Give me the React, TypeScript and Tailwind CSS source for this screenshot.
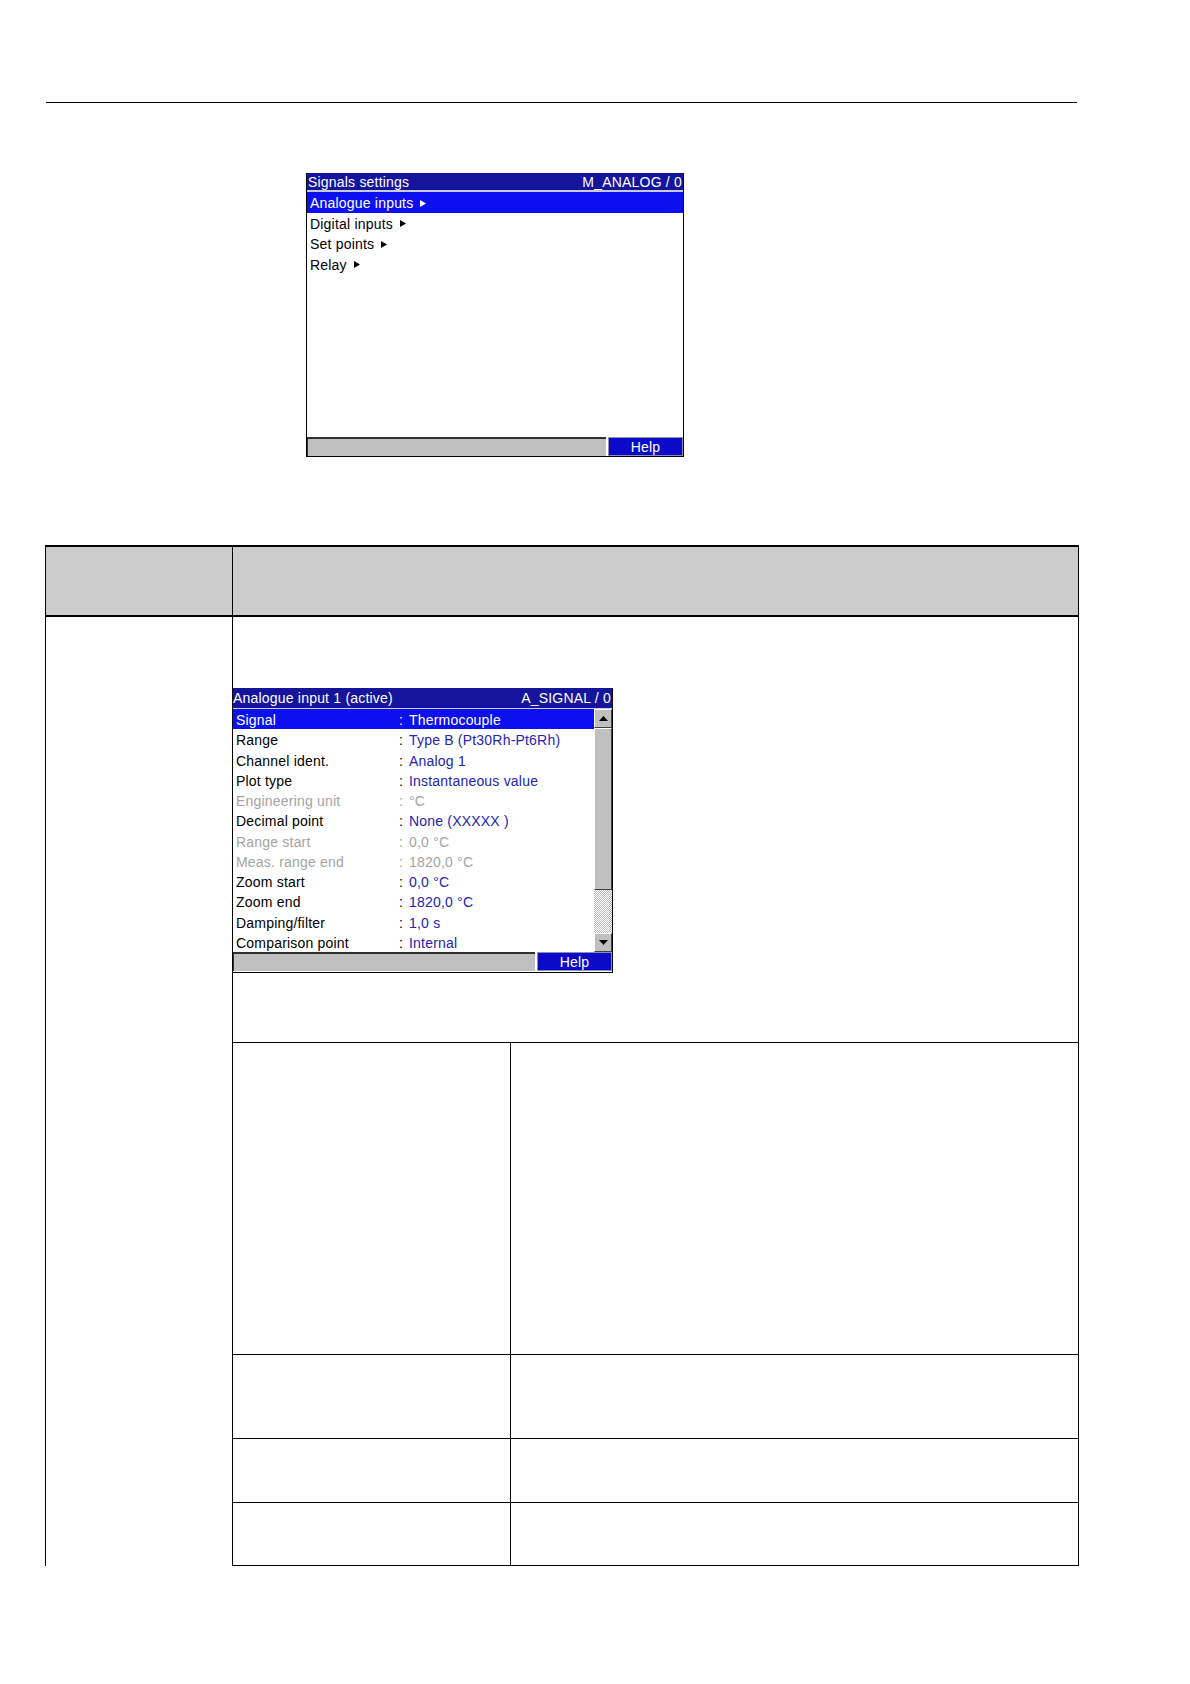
import React from 'react';

interface SignalRow {
  label: string;
  value: string;
  selected?: boolean;
  dim?: boolean;
}

const signalRows: SignalRow[] = [
  { label: 'Signal', value: 'Thermocouple', selected: true },
  { label: 'Range', value: 'Type B (Pt30Rh-Pt6Rh)' },
  { label: 'Channel ident.', value: 'Analog 1' },
  { label: 'Plot type', value: 'Instantaneous value' },
  { label: 'Engineering unit', value: '°C', dim: true },
  { label: 'Decimal point', value: 'None (XXXXX )' },
  { label: 'Range start', value: '0,0 °C', dim: true },
  { label: 'Meas. range end', value: '1820,0 °C', dim: true },
  { label: 'Zoom start', value: '0,0 °C' },
  { label: 'Zoom end', value: '1820,0 °C' },
  { label: 'Damping/filter', value: '1,0 s' },
  { label: 'Comparison point', value: 'Internal' },
];

const menuItems = ['Analogue inputs', 'Digital inputs', 'Set points', 'Relay'];

// kleines Dreieck hinter den Menüpunkten
const Arrow = ({ white }: { white?: boolean }) => (
  <svg width="6" height="7" viewBox="0 0 6 7" className="ml-[7px] inline-block">
    <path d="M0 0 L6 3.5 L0 7 Z" fill={white ? '#ffffff' : '#000000'} />
  </svg>
);

const HelpBar = () => (
  <div className="flex h-[19px]">
    <div className="flex-1 bg-[#c0c0c0] border-t-2 border-l border-[#303030]" />
    <div className="w-[75px] ml-[2px] bg-[#0a0ac8] border border-[#8c8cb4] text-white text-[14px] leading-[15px] pt-[2px] text-center overflow-hidden">
      Help
    </div>
  </div>
);

const SignalsScreen = () => (
  <div className="w-[378px] h-[284px] flex flex-col border-x border-b border-black bg-white tracking-[0.2px]">
    <div className="h-[17px] bg-[#14149c] text-white text-[14px] leading-[17px] pt-[1px] flex justify-between px-[1px] overflow-hidden">
      <span>Signals settings</span>
      <span>M_ANALOG / 0</span>
    </div>
    <div className="h-[2px] bg-[#c8c8d8]" />
    <div className="flex-1">
      {menuItems.map((item, i) => (
        <div
          key={item}
          className={`h-[20.5px] pl-[3px] pt-[2px] text-[14px] leading-[18px] flex items-center ${
            i === 0 ? 'bg-[#0c10f0] text-white' : 'text-black'
          }`}
        >
          {item}
          <Arrow white={i === 0} />
        </div>
      ))}
    </div>
    <HelpBar />
  </div>
);

const ScrollButton = ({ down }: { down?: boolean }) => (
  <div className="h-[19px] bg-[#c0c0c0] border-t border-l border-t-white border-l-white border-b border-r border-b-[#404040] border-r-[#404040] flex items-center justify-center">
    <svg width="9" height="5" viewBox="0 0 9 5">
      <path d={down ? 'M0 0 L9 0 L4.5 5 Z' : 'M0 5 L9 5 L4.5 0 Z'} fill="#000000" />
    </svg>
  </div>
);

const AnalogueScreen = () => (
  <div className="-ml-px w-[381px] h-[285px] flex flex-col border-x border-b border-black bg-white tracking-[0.2px]">
    <div className="h-[20px] bg-[#14149c] text-white text-[14px] leading-[20px] flex justify-between pr-[1px]">
      <span>Analogue input 1 (active)</span>
      <span>A_SIGNAL / 0</span>
    </div>
    <div className="h-px bg-[#d0d0e0]" />
    <div className="flex h-[243px]">
      <div className="flex-1">
        {signalRows.map((row) => {
          const labelColor = row.selected
            ? 'text-white'
            : row.dim
            ? 'text-[#a4a4a4]'
            : 'text-black';
          const valueColor = row.selected
            ? 'text-white'
            : row.dim
            ? 'text-[#a4a4a4]'
            : 'text-[#2424b0]';
          return (
            <div
              key={row.label}
              className={`h-[20.25px] flex text-[14px] leading-[20px] pl-[3px] pt-px ${
                row.selected ? 'bg-[#0c10f0]' : ''
              }`}
            >
              <span className={`w-[163px] ${labelColor}`}>{row.label}</span>
              <span className={`w-[10px] ${labelColor}`}>:</span>
              <span className={valueColor}>{row.value}</span>
            </div>
          );
        })}
      </div>
      <div className="w-[18px] flex flex-col">
        <ScrollButton />
        <div className="h-[162px] bg-[#c0c0c0] border-t border-l border-t-white border-l-white border-b border-r border-b-[#404040] border-r-[#404040]" />
        <div className="flex-1 bg-[repeating-conic-gradient(#bcbcbc_0_25%,#ffffff_0_50%)] bg-[length:2px_2px]" />
        <ScrollButton down />
      </div>
    </div>
    <HelpBar />
  </div>
);

export default function App() {
  return (
    <div className="w-[1190px] min-h-[1684px] bg-white pt-[102px] font-['Liberation_Sans',Arial,sans-serif]">
      <div className="ml-[46px] w-[1031px] h-px bg-black" />

      <div className="mt-[70px] ml-[306px]">
        <SignalsScreen />
      </div>

      <div className="mt-[88px] ml-[45px] w-[1034px] grid grid-cols-[187px_1fr]">
        <div className="h-[72px] bg-[#cccccc] border-t-2 border-b-2 border-l border-black" />
        <div className="h-[72px] bg-[#cccccc] border-t-2 border-b-2 border-l border-r border-black" />

        <div className="h-[949px] border-l border-black" />
        <div className="h-[949px] border-l border-r border-black flex flex-col">
          <div className="h-[425px] pt-[71px]">
            <AnalogueScreen />
          </div>
          <div className="grid grid-cols-[277px_1fr] border-t border-black">
            <div className="h-[312px] border-b border-black" />
            <div className="h-[312px] border-b border-l border-black" />
            <div className="h-[84px] border-b border-black" />
            <div className="h-[84px] border-b border-l border-black" />
            <div className="h-[64px] border-b border-black" />
            <div className="h-[64px] border-b border-l border-black" />
            <div className="h-[63px] border-b border-black" />
            <div className="h-[63px] border-b border-l border-black" />
          </div>
        </div>
      </div>
    </div>
  );
}
